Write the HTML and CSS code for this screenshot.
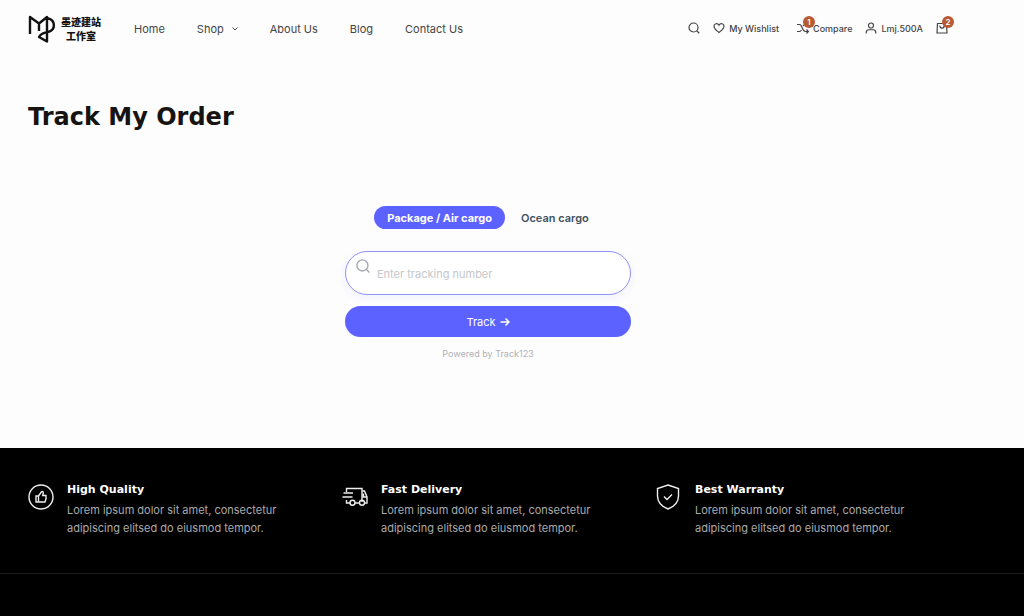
FILE: index.html
```html
<!DOCTYPE html>
<html lang="en">
<head>
  <meta charset="UTF-8" />
  <meta name="viewport" content="width=device-width, initial-scale=1.0" />
  <title>Track My Order</title>
  <link rel="stylesheet" href="styles.css">
</head>
<body>

  <!-- === Header === -->
  <header class="header container">
    <a href="#" class="logo">
      <svg class="logo-mark" viewBox="0 0 28 28" aria-hidden="true">
        <path d="M2 19V2l9 6.500L19 2v24.500l-8-4.500c2-4 5-4 9-5 8-2 8-12-1-14M11 8.500V16" />
      </svg>
      <span class="logo-text">墨迹建站<br>工作室</span>
    </a>

    <nav class="nav">
      <a href="#">Home</a>
      <a href="#">Shop
        <svg class="chevron" viewBox="0 0 6 4" aria-hidden="true"><path d="M.5.5 3 3 5.500.5" /></svg>
      </a>
      <a href="#">About Us</a>
      <a href="#">Blog</a>
      <a href="#">Contact Us</a>
    </nav>

    <div class="tools">
      <a href="#" aria-label="Search">
        <svg class="icon" viewBox="0 0 24 24"><circle cx="11" cy="11" r="9" /><path d="m17.500 17.500 5 5" /></svg>
      </a>
      <a href="#">
        <svg class="icon" viewBox="0 0 24 24"><path d="M12 21C8 17.500 2 13.500 2 8.500 2 3 9 1.500 12 6.500 15 1.500 22 3 22 8.500 22 13.500 16 17.500 12 21z" /></svg>
        My Wishlist
      </a>
      <a href="#" class="compare">
        <svg class="icon" viewBox="0 0 24 24"><path d="M0 5h5c7 0 4 14 12 14h6M0 19h5c2 0 3-1 4-3M12 8c1-2 2-3 5-3h6M19 15l4 4-4 4M19 1l4 4-4 4" /></svg>
        Compare
        <span class="badge">1</span>
      </a>
      <a href="#">
        <svg class="icon" viewBox="0 0 24 24"><circle cx="12" cy="7" r="5" /><path d="M2.500 23v-2c0-4 2-5.500 5-5.500h9c3 0 5 1.500 5 5.500v2" /></svg>
        Lmj.500A
      </a>
      <a href="#" class="cart" aria-label="Cart">
        <svg class="icon" viewBox="0 0 24 24"><path d="M3 3h18l1 19H2zM7.500 7c0 7 9 7 9 0" /></svg>
        <span class="badge">2</span>
      </a>
    </div>
  </header>

  <!-- === Order tracking === -->
  <main class="main container">
    <h1>Track My Order</h1>

    <form class="track-form">
      <div class="tabs">
        <button type="button" class="tab active">Package / Air cargo</button>
        <button type="button" class="tab">Ocean cargo</button>
      </div>
      <label class="field">
        <svg class="field-icon" viewBox="0 0 24 24" aria-hidden="true"><circle cx="11" cy="11" r="9.500" /><path d="m18 18 5 5" /></svg>
        <input type="text" placeholder="Enter tracking number" aria-label="Tracking number" />
      </label>
      <button type="submit" class="track-button">Track
        <svg class="arrow" viewBox="0 0 10 10" aria-hidden="true"><path d="M.5 5h8.500M5.500 1.500 9 5 5.500 8.500" /></svg>
      </button>
      <p class="powered">Powered by Track123</p>
    </form>
  </main>

  <!-- === Footer === -->
  <footer class="footer">
    <div class="features container">
      <div class="feature">
        <svg class="feature-icon" viewBox="0 0 26 26" aria-hidden="true">
          <circle cx="13" cy="13" r="12" />
          <path d="M8 12h2.500v6H8zM10.500 12 13 8.500c.3-1.500 2.500-1.500 2.300.5l-.6 2.500H18v3.500l-1 3h-6.500" />
        </svg>
        <div>
          <h2>High Quality</h2>
          <p>Lorem ipsum dolor sit amet, consectetur adipiscing elitsed do eiusmod tempor.</p>
        </div>
      </div>
      <div class="feature">
        <svg class="feature-icon" viewBox="0 0 26 26" aria-hidden="true">
          <path d="M4.500 8V4.500h15.500V18M20 7h2.500l2.500 6v6h-2M25 13h-3.500V9.500M1.500 9H11M.5 13h10M4.500 16v3h4M13 19h5" />
          <circle cx="10.500" cy="18.800" r="2.500" /><circle cx="20" cy="18.800" r="2.500" />
        </svg>
        <div>
          <h2>Fast Delivery</h2>
          <p>Lorem ipsum dolor sit amet, consectetur adipiscing elitsed do eiusmod tempor.</p>
        </div>
      </div>
      <div class="feature">
        <svg class="feature-icon" viewBox="0 0 26 26" aria-hidden="true">
          <path d="M12 1 22.500 4.500V12c0 6-4 10.500-10.500 13C5.500 22.500 1.500 18 1.500 12V4.500zM8 12.500l3 3 5-5" />
        </svg>
        <div>
          <h2>Best Warranty</h2>
          <p>Lorem ipsum dolor sit amet, consectetur adipiscing elitsed do eiusmod tempor.</p>
        </div>
      </div>
    </div>
  </footer>

</body>
</html>
```
FILE: styles.css
```css
/* Basic Resets */
* { margin: 0; padding: 0; box-sizing: border-box; }
body {
  display: flex;
  flex-direction: column;
  min-height: 100vh;
  background: #fdfdfd;
  color: #444;
  font-family: "Inter", sans-serif;
  font-size: 11px;
}
a { color: inherit; text-decoration: none; }
button, input { font: inherit; border: none; }
svg { flex: none; fill: none; stroke: currentColor; }
.container { width: 100%; padding: 0 76px 0 28px; }

/* === Header === */
.header { display: flex; align-items: center; height: 57px; }
.logo { display: flex; align-items: center; gap: 5px; color: #111; }
.logo-mark { width: 28px; height: 28px; stroke-width: 2.4; stroke-linejoin: round; }
.logo-text {
  font: 900 10px/14px "Noto Sans CJK SC", sans-serif;
  text-align: center;
}
.nav { display: flex; gap: 32px; margin-left: 33px; }
.nav a { display: flex; align-items: center; gap: 8px; }
.chevron { width: 6px; height: 4px; }
.tools {
  display: flex;
  align-items: center;
  gap: 13px;
  margin-left: auto;
  padding-bottom: 1px;
  font-size: 9px;
  font-weight: 500;
}
.tools a { position: relative; display: flex; align-items: center; gap: 4px; }
.tools .compare { margin-left: 5px; }
.icon { width: 12px; height: 12px; stroke-width: 2.4; }
.badge {
  position: absolute;
  top: -6px;
  left: 6px;
  width: 12px;
  height: 12px;
  border-radius: 50%;
  background: #b85a32;
  color: #fff;
  font-size: 8px;
  font-weight: 600;
  line-height: 12px;
  text-align: center;
}

/* === Order tracking === */
.main { padding-top: 46px; padding-bottom: 88px; }
h1 {
  color: #171310;
  font: bold 24px/28px "DejaVu Sans", sans-serif;
}
.track-form {
  display: flex;
  flex-direction: column;
  width: 286px;
  max-width: 100%;
  margin: 75px auto 0;
}
.tabs { display: flex; justify-content: center; gap: 3px; margin-bottom: 22px; }
.tab {
  height: 23px;
  padding: 0 13px;
  border-radius: 12px;
  background: none;
  color: #41525d;
  font-weight: 600;
  cursor: pointer;
}
.tab.active { background: #5c62ff; color: #fff; font-weight: 700; }
.field {
  display: flex;
  height: 44px;
  padding: 7px 12px 0 10px;
  border: 1px solid #8f92f8;
  border-radius: 22px;
  background: #fff;
  box-shadow: 0 3px 8px rgba(92, 98, 255, .08);
}
.field-icon { width: 14px; height: 14px; color: #a3a9b0; stroke-width: 2.4; }
.field input { flex: 1; min-width: 0; height: 30px; margin-left: 7px; background: none; outline: none; }
.field input::placeholder { color: #c4c7ca; }
.track-button {
  display: flex;
  align-items: center;
  justify-content: center;
  gap: 4px;
  height: 31px;
  margin-top: 11px;
  border-radius: 16px;
  background: #5c62ff;
  color: #fff;
  cursor: pointer;
}
.arrow { width: 10px; height: 10px; stroke-width: 1.5; }
.powered { margin-top: 11px; color: #adb1b6; font-size: 9px; line-height: 12px; text-align: center; }

/* === Footer === */
.footer { flex: 1; background: #000; color: #aaa; }
.features {
  display: grid;
  grid-template-columns: repeat(3, 1fr);
  gap: 22px;
  padding-top: 35px;
  padding-bottom: 36px;
  border-bottom: 1px solid #1d1d1d;
}
.feature { display: flex; gap: 13px; }
.feature-icon { width: 26px; height: 26px; margin-top: 1px; color: #eee; stroke-width: 1.4; }
.feature h2 {
  margin-bottom: 4px;
  color: #fff;
  font: bold 11px/14px "DejaVu Sans", sans-serif;
}
.feature p { max-width: 220px; line-height: 18px; }
```
